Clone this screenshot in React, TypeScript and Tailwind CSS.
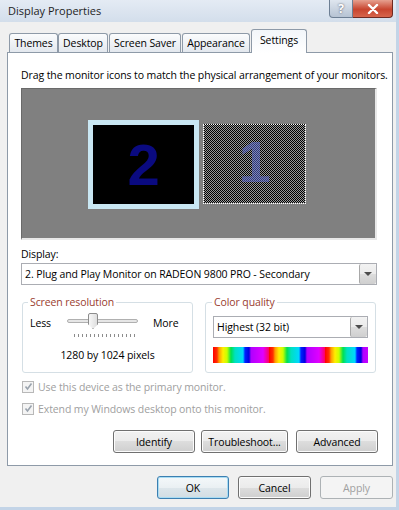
import React from 'react';

const tabs = [
  { label: 'Themes', cls: 'w-[49px]' },
  { label: 'Desktop', cls: 'w-[50px]' },
  { label: 'Screen Saver', cls: 'w-[72px] ml-[1px]' },
  { label: 'Appearance', cls: 'w-[68px] ml-[1px]' },
];

const VistaButton = ({
  label,
  width,
  variant = 'normal',
}: {
  label: string;
  width: string;
  variant?: 'normal' | 'default' | 'disabled';
}) => {
  const base = 'h-[23px] rounded-[3px] border flex items-center justify-center';
  const look =
    variant === 'default'
      ? 'border-[#3c7fb1] bg-[linear-gradient(#f4f8fa_0%,#eaf0f3_50%,#dde6eb_50%,#d2dde3_100%)] shadow-[inset_0_0_0_1px_#a9dcf3] text-black'
      : variant === 'disabled'
      ? 'border-[#adb2b5] bg-[#f4f4f4] text-[#a0a0a0]'
      : 'border-[#707070] bg-[linear-gradient(#f2f2f2_0%,#ebebeb_50%,#dddddd_50%,#cfcfcf_100%)] shadow-[inset_0_0_0_1px_#fcfcfc] text-black';
  return <div className={`${base} ${look} ${width}`}>{label}</div>;
};

const DropArrow = () => (
  <div className="w-[17px] h-full border-l border-[#a8a8a8] rounded-[2px] bg-[linear-gradient(#f2f2f2_0%,#ebebeb_50%,#dddddd_50%,#cfcfcf_100%)] flex items-center justify-center">
    <div className="w-0 h-0 border-l-[4px] border-r-[4px] border-t-[4px] border-l-transparent border-r-transparent border-t-[#4d4d4d]" />
  </div>
);

const CheckRow = ({ label }: { label: string }) => (
  <div className="flex items-center h-[15px]">
    <div className="w-[12px] h-[12px] border border-[#b8b8b8] bg-[#f4f4f4] flex items-center justify-center">
      <svg width="9" height="9" viewBox="0 0 9 9">
        <path d="M1.5 4.5 L3.5 7 L7.5 1.5" stroke="#9aa3ad" strokeWidth="1.6" fill="none" />
      </svg>
    </div>
    <span className="ml-[4px] text-[#a0a0a0]">{label}</span>
  </div>
);

export default function App() {
  return (
    <div className="w-[399px] h-[510px] bg-[#f0f0f0] font-['Open_Sans','Noto_Sans',sans-serif] text-[10.5px] tracking-[-0.1px] text-black leading-[14px] border-r-[3px] border-b-[3px] border-[#c3d4e7] overflow-hidden">
      {/* title bar */}
      <div className="h-[22px] flex items-start justify-between bg-[linear-gradient(#e4ebf4,#d3deeb)]">
        <div className="pl-[8px] pt-[4px] text-[11px] tracking-normal text-[#1e1e1e]">Display Properties</div>
        <div className="flex mr-[3px]">
          <div className="w-[24px] h-[18px] rounded-bl-[4px] border border-t-0 border-[#6d7f94] bg-[linear-gradient(#dfe6ef,#b6c3d3)] flex items-center justify-center text-[12px] font-bold text-white [text-shadow:0_0_2px_#445]">
            ?
          </div>
          <div className="w-[40px] h-[18px] rounded-br-[4px] border border-l-0 border-t-0 border-[#6e2a22] bg-[linear-gradient(#e6a08f,#c8452f_55%,#d7654c)] flex items-center justify-center">
            <svg width="12" height="10" viewBox="0 0 12 10">
              <path d="M2 1 L10 9 M10 1 L2 9" stroke="#ffffff" strokeWidth="2.4" strokeLinecap="round" />
            </svg>
          </div>
        </div>
      </div>

      {/* tabs */}
      <div className="flex items-end h-[23px] mt-[7px] ml-[9px] relative z-10">
        {tabs.map((t) => (
          <div
            key={t.label}
            className={`h-[19px] border border-b-0 border-[#8e9aa8] rounded-t-[3px] bg-[linear-gradient(#fbfcfd,#e3e8ee)] flex items-center justify-center ${t.cls}`}
          >
            {t.label}
          </div>
        ))}
        <div className="w-[56px] ml-[1px] h-[24px] -mb-px border border-b-0 border-[#8e9aa8] rounded-t-[3px] bg-[linear-gradient(#f2f6fa,#ffffff)] flex items-start justify-center pt-[3px]">
          Settings
        </div>
      </div>

      {/* tab panel */}
      <div className="ml-[7px] w-[386px] h-[414px] border border-[#8e9aa8] bg-white pl-[13px] pt-[15px]">
        <div className="whitespace-nowrap">Drag the monitor icons to match the physical arrangement of your monitors.</div>

        <div className="mt-[6px] w-[356px] h-[152px] bg-[#808080] border-t border-l border-[#6a6a6a] border-b-2 border-r-2 border-b-[#e8e8e8] border-r-[#e8e8e8] pl-[66px] pt-[31px] flex items-start">
          <div className="w-[111px] h-[89px] bg-[#c9e7f3] p-[5px]">
            <div className="w-full h-full bg-black flex items-center justify-center text-[58px] font-bold text-[#0a0a80] font-['Liberation_Sans',Arial,sans-serif] leading-none">
              2
            </div>
          </div>
          <div className="ml-[4px] mt-[4px] w-[103px] h-[80px] border border-dotted border-white bg-[repeating-conic-gradient(#000_0_25%,#9a9a9a_0_50%)] bg-[length:2px_2px] flex items-center justify-center overflow-hidden">
            <span className="text-[58px] font-bold text-[#6070e0] opacity-50 font-['Liberation_Sans',Arial,sans-serif] leading-none mt-[-4px]">
              1
            </span>
          </div>
        </div>

        <div className="mt-[7px]">Display:</div>
        <div className="mt-[2px] w-[356px] h-[22px] border border-[#abadb3] flex items-center justify-between pl-[3px]">
          <span>2. Plug and Play Monitor on RADEON 9800 PRO - Secondary</span>
          <DropArrow />
        </div>

        <div className="mt-[17px] flex ml-px">
          <div className="relative w-[171px] h-[71px] border border-[#d5dfe5] rounded-[3px]">
            <span className="absolute left-[5px] -top-[8px] bg-white px-[2px] text-[#9a4030]">Screen resolution</span>
            <div className="flex items-center mt-[10px] ml-[7px]">
              <span>Less</span>
              <div className="ml-[16px] w-[71px] h-[20px] relative">
                <div className="absolute left-0 top-[6px] w-[71px] h-[4px] border border-[#b0b0b0] bg-[#e6e6e6] rounded-[2px]" />
                <div className="absolute left-[21px] top-0 w-[10px] h-[16px] border border-[#8c8c8c] bg-[linear-gradient(90deg,#f7f7f7,#dedede)] rounded-t-[2px] [clip-path:polygon(0_0,100%_0,100%_70%,50%_100%,0_70%)]" />
              </div>
              <span className="ml-[15px]">More</span>
            </div>
            <div className="ml-[51px] mt-[1px] w-[63px] h-[3px] bg-[repeating-linear-gradient(90deg,#8c8c8c_0px,#8c8c8c_1px,transparent_1px,transparent_4px)]" />
            <div className="mt-[11px] text-center">1280 by 1024 pixels</div>
          </div>

          <div className="relative ml-[12px] w-[171px] h-[71px] border border-[#d5dfe5] rounded-[3px]">
            <span className="absolute left-[6px] -top-[8px] bg-white px-[2px] text-[#9a4030]">Color quality</span>
            <div className="mt-[13px] ml-[7px] w-[155px] h-[22px] border border-[#abadb3] flex items-center justify-between pl-[3px]">
              <span>Highest (32 bit)</span>
              <DropArrow />
            </div>
            <div className="mt-[9px] ml-[7px] w-[155px] h-[16px] bg-[repeating-linear-gradient(90deg,#ff0000_0px,#ff3000_4px,#ff9900_6px,#ffee00_10px,#c8ff00_14px,#00e050_18px,#00e0c0_22px,#00d8ff_30px,#0020ff_32px,#0000e0_36px,#b000ff_38px,#e000ff_50px,#ff0060_56px)]" />
          </div>
        </div>

        <div className="mt-[6px] ml-px flex flex-col gap-[7px]">
          <CheckRow label="Use this device as the primary monitor." />
          <CheckRow label="Extend my Windows desktop onto this monitor." />
        </div>

        <div className="mt-[14px] flex ml-[92px] gap-[6px]">
          <VistaButton label="Identify" width="w-[82px]" />
          <VistaButton label="Troubleshoot..." width="w-[87px]" />
          <div className="ml-[2px]">
            <VistaButton label="Advanced" width="w-[82px]" />
          </div>
        </div>
      </div>

      {/* dialog buttons */}
      <div className="mt-[10px] ml-[157px] flex gap-[9px]">
        <VistaButton label="OK" width="w-[72px]" variant="default" />
        <VistaButton label="Cancel" width="w-[73px]" />
        <VistaButton label="Apply" width="w-[73px]" variant="disabled" />
      </div>
    </div>
  );
}
